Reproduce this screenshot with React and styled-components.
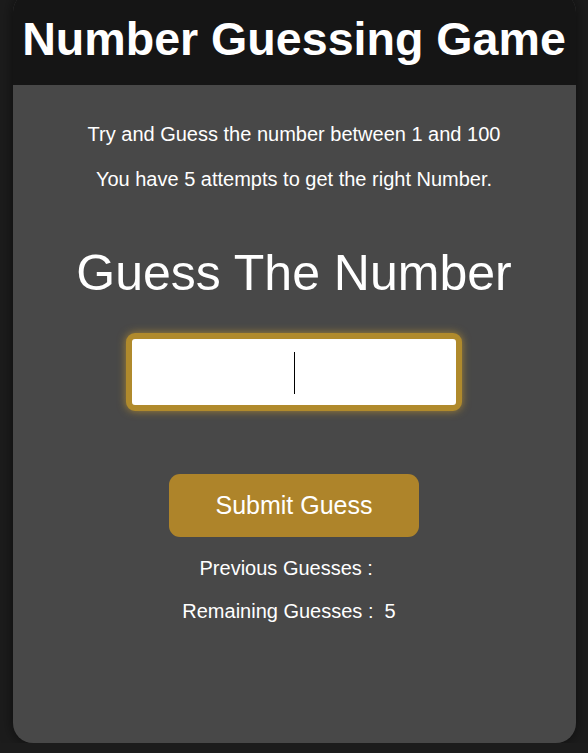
import React, { useState } from 'react';
import styled, { createGlobalStyle } from 'styled-components';

const GlobalStyle = createGlobalStyle`
  html, body {
    margin: 0;
    padding: 0;
    background: #1c1c1c;
    font-family: "Liberation Sans", Arial, sans-serif;
    overflow: hidden;
  }
`

const Card = styled.div`
  width: 563px;
  height: 751px;
  margin: -8px auto 0;
  border-radius: 20px;
  overflow: hidden;
  background: #484848;
  box-shadow: 0 0 14px rgba(0, 0, 0, 0.55);
  display: flex;
  flex-direction: column;
`

const Header = styled.div`
  height: 93px;
  background: #151515;
  display: flex;
  align-items: flex-end;
  justify-content: center;
  padding-bottom: 22px;
  box-sizing: border-box;
`

const Title = styled.h1`
  margin: 0;
  color: #fff;
  font-size: 46.6px;
  font-weight: bold;
  line-height: 1;
`

const Body = styled.div`
  display: flex;
  flex-direction: column;
  align-items: center;
  padding-top: 34px;
  color: #fff;
`

const Info = styled.p`
  margin: 0 0 ${props => props.gap || 0}px;
  font-size: 20px;
  line-height: 30px;
`

const Heading = styled.h2`
  margin: 0 0 32px;
  font-size: 50px;
  font-weight: normal;
  line-height: 56px;
`

const InputWrap = styled.div`
  position: relative;
  margin-bottom: 63px;
`

const GuessInput = styled.input`
  display: block;
  width: 336px;
  height: 78px;
  box-sizing: border-box;
  border: 6px solid #b08a2c;
  border-radius: 9px;
  background: #fff;
  box-shadow: 0 0 8px rgba(196, 152, 48, 0.75);
  text-align: center;
  font-size: 36px;
  font-family: "Liberation Sans", Arial, sans-serif;
  outline: none;
  caret-color: transparent;
`

const Caret = styled.span`
  position: absolute;
  left: 168px;
  top: 19px;
  width: 1px;
  height: 42px;
  background: #000;
  pointer-events: none;
`

const SubmitButton = styled.button`
  width: 250px;
  height: 63px;
  border: none;
  border-radius: 11px;
  background: #ae842a;
  color: #fff;
  font-size: 25px;
  font-family: "Liberation Sans", Arial, sans-serif;
  margin-bottom: 16px;
`

const Stat = styled.p`
  margin: 0 0 ${props => props.gap || 0}px;
  padding-right: 10px;
  font-size: 20px;
  line-height: 30px;
  white-space: pre;
`

export default function App() {
  const [guess, setGuess] = useState('')
  const remaining = 5

  return (
    <>
      <GlobalStyle />
      <Card>
        <Header>
          <Title>Number Guessing Game</Title>
        </Header>
        <Body>
          <Info gap={15}>Try and Guess the number between 1 and 100</Info>
          <Info gap={51}>You have 5 attempts to get the right Number.</Info>
          <Heading>Guess The Number</Heading>
          <InputWrap>
            <GuessInput value={guess} onChange={e => setGuess(e.target.value)} />
            {guess === '' && <Caret />}
          </InputWrap>
          <SubmitButton>Submit Guess</SubmitButton>
          <Stat gap={13}>Previous Guesses : </Stat>
          <Stat>{`Remaining Guesses :  ${remaining}`}</Stat>
        </Body>
      </Card>
    </>
  )
}
